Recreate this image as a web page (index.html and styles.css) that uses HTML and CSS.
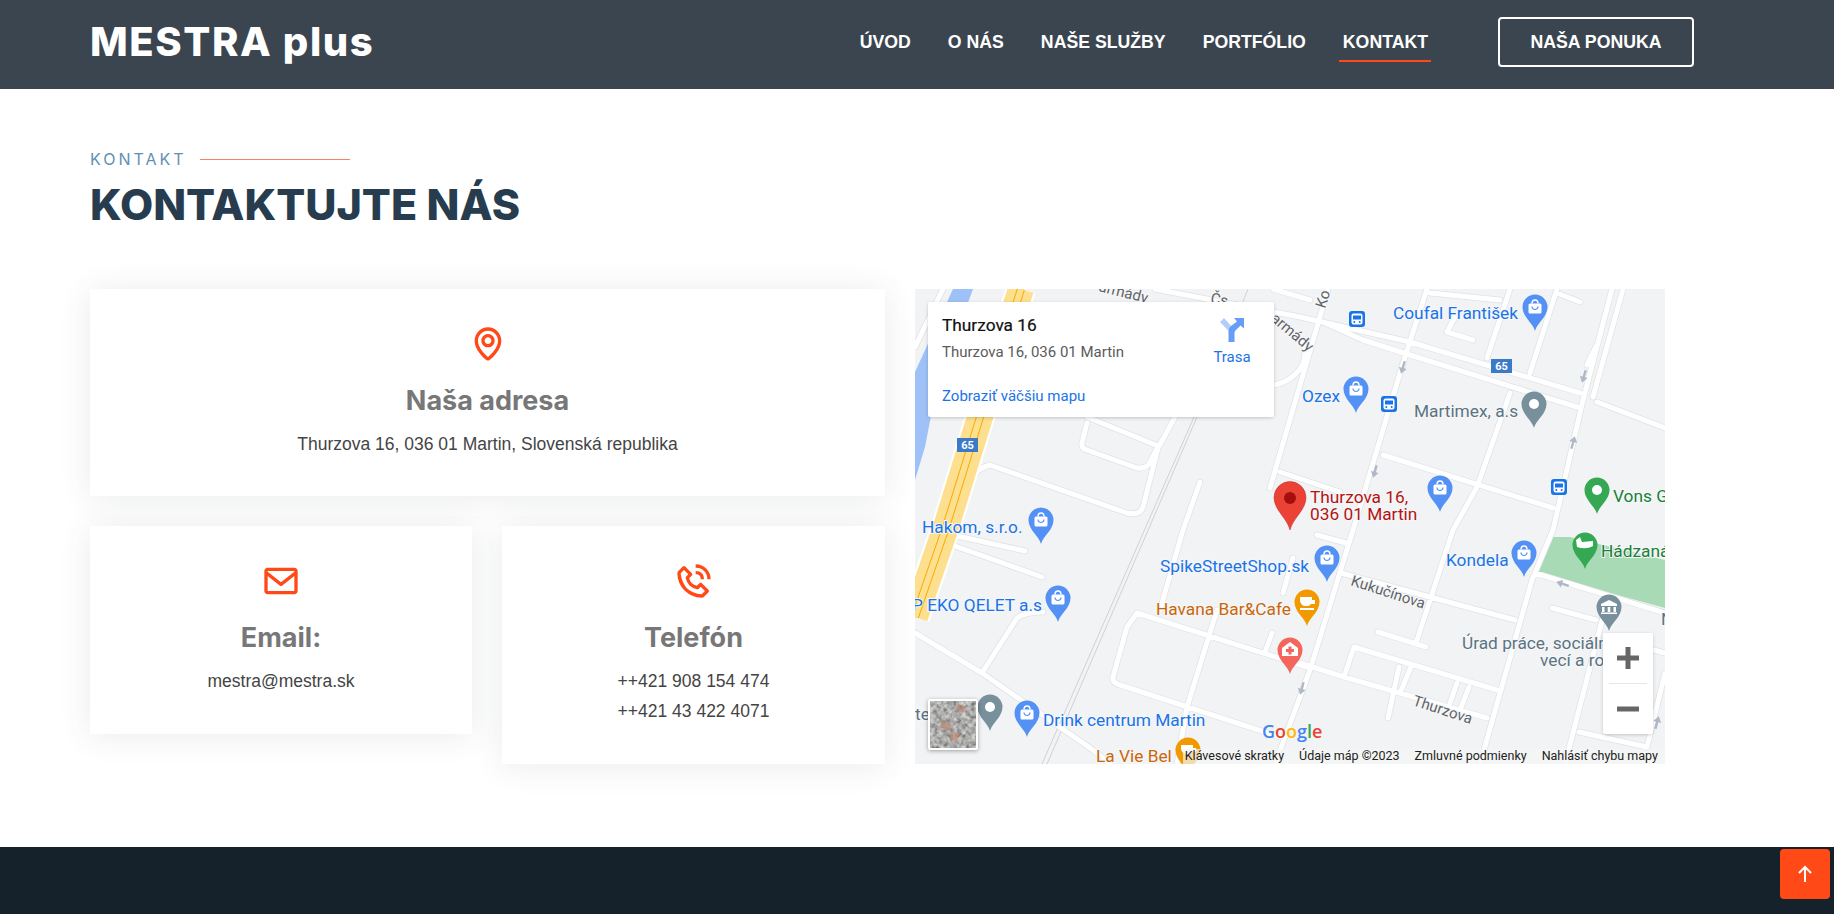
FILE: index.html
```html
<!DOCTYPE html>
<html lang="sk">
<head>
<meta charset="utf-8">
<title>MESTRA plus – Kontakt</title>
<link rel="stylesheet" href="styles.css">
</head>
<body>
<header class="site-header">
  <a class="logo" href="#">MESTRA plus</a>
  <nav class="nav">
    <a href="#">ÚVOD</a>
    <a href="#">O NÁS</a>
    <a href="#">NAŠE SLUŽBY</a>
    <a href="#">PORTFÓLIO</a>
    <a href="#" class="active">KONTAKT</a>
    <a href="#" class="nav-cta">NAŠA PONUKA</a>
  </nav>
</header>

<main class="contact">
  <div class="eyebrow"><span>KONTAKT</span><i class="eyebrow-line"></i></div>
  <h1 class="title">KONTAKTUJTE NÁS</h1>

  <div class="contact-grid">
    <div class="cards">
      <section class="card card-wide">
        <svg class="card-icon" viewBox="0 0 24 24"><path d="M12 14c2.206 0 4-1.794 4-4s-1.794-4-4-4-4 1.794-4 4 1.794 4 4 4zm0-6c1.103 0 2 .897 2 2s-.897 2-2 2-2-.897-2-2 .897-2 2-2z"/><path d="M11.42 21.814a.998.998 0 0 0 1.16 0C12.884 21.599 20.029 16.44 20 10c0-4.411-3.589-8-8-8S4 5.589 4 9.995c-.029 6.445 7.116 11.604 7.42 11.819zM12 4c3.309 0 6 2.691 6 6.005.021 4.438-4.388 8.423-6 9.73-1.611-1.308-6.021-5.294-6-9.735 0-3.309 2.691-6 6-6z"/></svg>
        <h3>Naša adresa</h3>
        <p>Thurzova 16, 036 01 Martin, Slovenská republika</p>
      </section>
      <section class="card">
        <svg class="card-icon" viewBox="0 0 24 24"><path d="M20 4H4c-1.103 0-2 .897-2 2v12c0 1.103.897 2 2 2h16c1.103 0 2-.897 2-2V6c0-1.103-.897-2-2-2zm0 2v.511l-8 6.223-8-6.222V6h16zM4 18V9.044l7.386 5.745a.994.994 0 0 0 1.228 0L20 9.044 20.002 18H4z"/></svg>
        <h3>Email:</h3>
        <p>mestra@mestra.sk</p>
      </section>
      <section class="card">
        <svg class="card-icon" viewBox="0 0 24 24"><path d="M16.57 22a2 2 0 0 0 1.43-.59l2.71-2.71a1 1 0 0 0 0-1.41l-4-4a1 1 0 0 0-1.41 0l-1.6 1.59a7.55 7.55 0 0 1-3-1.59 7.62 7.62 0 0 1-1.59-3l1.59-1.6a1 1 0 0 0 0-1.41l-4-4a1 1 0 0 0-1.41 0L2.59 6A2 2 0 0 0 2 7.43 15.28 15.28 0 0 0 6.3 17.7 15.28 15.28 0 0 0 16.57 22zM6 5.41 8.59 8 7.3 9.29a1 1 0 0 0-.3.91 10.12 10.12 0 0 0 2.3 4.5 10.08 10.08 0 0 0 4.5 2.3 1 1 0 0 0 .91-.27L16 15.41 18.59 18l-2 2a15.28 15.28 0 0 1-8.87-3.71A15.28 15.28 0 0 1 4 7.41zM20 11h2a8.81 8.81 0 0 0-9-9v2a6.77 6.77 0 0 1 7 7z"/><path d="M13 8c2.1 0 3 .9 3 3h2c0-3.22-1.78-5-5-5z"/></svg>
        <h3>Telefón</h3>
        <p>++421 908 154 474<br>++421 43 422 4071</p>
      </section>
    </div>

    <div class="map">
      <svg class="map-canvas" viewBox="915 289 750 475">
        <defs>
          <path id="roads" d="M960 507L973 477Q978 468 990 465L1127 513Q1140 516 1143 507L1158 448L1175 417L1183 395
            M1087 417L1158 446M1087 423L1082 443Q1081 449 1087 450L1137 468Q1147 469 1150 462L1158 447
            M1200 482L1183 530L1160 610
            M1427 289L1403 363L1353 530L1310 670L1275 764
            M1328 289L1270 488M1280 472L1340 492
            M1273 385Q1293 382 1303 364Q1307 352 1303 342
            M1155 289L1300 317L1410 342L1580 393
            M1323 322L1363 340L1410 355L1577 407
            M1597 402L1665 428M1273 289L1310 300M1430 293L1500 300
            M1510 289L1487 358M1557 289L1530 373M1557 293L1580 302
            M1457 313L1447 332L1473 340
            M1612 289L1583 400L1553 530L1532 580L1480 764
            M1623 289L1593 397M1587 365Q1590 358 1597 345
            M1510 393L1477 487L1453 530L1416 643
            M1383 455L1553 508
            M1535 573L1665 613M1341 573L1515 620
            M1378 632L1426 647
            M1354 647L1497 690M1354 647L1344 677M1300 663L1344 677L1487 718
            M1399 667L1388 718M1411 667L1400 693M1457 683L1450 703M1469 687L1460 710
            M1603 617L1565 764M1579 732L1647 747M1552 608L1596 620M1665 673L1647 747M1654 650L1665 653
            M1317 535L1346 543
            M953 535L1025 551M952 545L1042 577
            M915 633L982 673L1093 750L1110 764
            M982 673L1017 618Q1025 612 1043 612
            M1137 613L1127 627L1113 677Q1112 683 1120 685L1280 737M1137 613L1307 667
            M1217 610L1187 707L1177 764M1272 633L1265 652
            M1293 558L1283 593
            M943 289L915 347"/>
          <g id="pin"><path d="M0 24C-2 16-12.500 10-12.500 0A12.500 12.500 0 1 1 12.500 0C12.500 10 2 16 0 24Z"/></g>
          <g id="shop">
            <use href="#pin"/>
            <path class="glyph-line" d="M-3-3.500a3 3.500 0 0 1 6 0"/>
            <rect class="glyph" x="-6.500" y="-3.500" width="13" height="10" rx="1.500"/>
            <path class="glyph-smile" d="M-3-.5a3 3 0 0 0 6 0"/>
          </g>
          <g id="dotpin"><use href="#pin"/><circle class="glyph" r="5"/></g>
          <g id="bus"><rect x="-8" y="-8" width="16" height="16" rx="3"/><rect class="glyph" x="-5.500" y="-5.500" width="11" height="11" rx="2"/><rect x="-4" y="-3.500" width="8" height="4"/><circle cx="-2.700" cy="3" r="1"/><circle cx="2.700" cy="3" r="1"/></g>
          <g id="arrow"><path d="M0-7L-4-1H-1.200V6H1.200V-1H4Z"/></g>
          <filter id="noise" x="0" y="0" width="100%" height="100%">
            <feTurbulence type="fractalNoise" baseFrequency="0.22" numOctaves="2" seed="7"/>
            <feColorMatrix type="matrix" values="0.9 0 0 0 -0.03  0.9 0 0 0 -0.03  0.9 0 0 0 -0.04  0 0 0 0 1"/>
            <feGaussianBlur stdDeviation="0.5"/>
          </filter>
        </defs>

        <rect class="m-bg" x="915" y="289" width="750" height="475"/>
        <path class="m-park" d="M1550 537L1537 573L1665 608V560L1570 537Z"/>
        <path class="m-water" d="M953 289H973L936 390L925 447L915 480V372Z"/>

        <path class="m-rail" d="M1197 417L1047 764M1194 417L1042 764M1248 289L1197 417"/>
        <use href="#roads" class="m-casing"/>
        <use href="#roads" class="m-road"/>

        <path class="hw-case" d="M1021 289L980 417L946 527L915 617"/>
        <path class="hw-fill" d="M1021 289L980 417L946 527L915 617"/>
        <path class="hw-line" d="M1021 289L980 417L946 527L915 617"/>
        <path class="hw-mid" d="M1021 289L980 417L946 527L915 617"/>

        <g class="arrows">
          <use href="#arrow" transform="translate(1403 367) rotate(196)"/>
          <use href="#arrow" transform="translate(1375 471) rotate(196)"/>
          <use href="#arrow" transform="translate(1584 376) rotate(196)"/>
          <use href="#arrow" transform="translate(1573 443) rotate(15)"/>
          <use href="#arrow" transform="translate(1563 584) rotate(-72)"/>
          <use href="#arrow" transform="translate(1657 723) rotate(15)"/>
          <use href="#arrow" transform="translate(1302 688) rotate(196)"/>
        </g>

        <g class="shield"><rect x="957" y="438" width="21" height="14"/><text x="967.500" y="449">65</text></g>
        <g class="shield"><rect x="1491" y="359" width="21" height="14"/><text x="1501.500" y="370">65</text></g>

        <g class="buses">
          <use href="#bus" x="1357" y="319"/>
          <use href="#bus" x="1389" y="404"/>
          <use href="#bus" x="1559" y="487"/>
        </g>

        <g class="pins-blue">
          <use href="#shop" x="1535" y="307"/>
          <use href="#shop" x="1356" y="389"/>
          <use href="#shop" x="1440" y="488"/>
          <use href="#shop" x="1041" y="520"/>
          <use href="#shop" x="1058" y="598"/>
          <use href="#shop" x="1027" y="713"/>
          <use href="#shop" x="1327" y="558"/>
          <use href="#shop" x="1524" y="553"/>
        </g>
        <g class="pins-grey">
          <use href="#dotpin" x="1534" y="404"/>
          <use href="#dotpin" x="990" y="707"/>
          <use href="#pin" x="1609" y="607"/>
          <path class="glyph" d="M1601 604L1609 600L1617 604V606H1601ZM1602 607H1604.500V612H1602ZM1607.700 607H1610.300V612H1607.700ZM1613.500 607H1616V612H1613.500ZM1601 612.500H1617V614H1601Z"/>
        </g>
        <g class="pins-green">
          <use href="#dotpin" x="1597" y="490"/>
          <use href="#pin" x="1585" y="545"/>
          <path class="glyph" d="M1576 540L1580 537L1582 542L1593 541V546Q1586 550 1577 547Z"/>
        </g>
        <g class="pins-orange">
          <use href="#pin" x="1307" y="602"/>
          <path class="glyph" d="M1300 597H1312V600H1315V604H1311Q1310 606 1307 606H1304Q1301 605 1300 601ZM1300 608H1314V610H1300Z"/>
          <use href="#pin" x="1188" y="750"/>
          <path class="glyph" d="M1181 745H1193V748H1196V752H1192Q1191 754 1188 754H1185Q1182 753 1181 749Z"/>
        </g>
        <g class="pins-red">
          <use href="#pin" x="1290" y="650"/>
          <path class="glyph" d="M1290 642L1298 648V656H1282V648Z"/>
          <path class="pin-cross" d="M1288.500 646.500H1291.500V649H1294V652H1291.500V654.500H1288.500V652H1286V649H1288.500Z"/>
        </g>

        <path class="marker" d="M1290 530C1287 518 1274 510 1274 497.500A16 16 0 1 1 1306 497.500C1306 510 1293 518 1290 530Z"/>
        <circle class="marker-dot" cx="1290" cy="498" r="6"/>

        <g class="lbl lbl-blue">
          <text x="1393" y="319">Coufal František</text>
          <text x="1302" y="402">Ozex</text>
          <text x="922" y="533">Hakom, s.r.o.</text>
          <text x="912" y="611">P EKO QELET a.s</text>
          <text x="1160" y="572">SpikeStreetShop.sk</text>
          <text x="1043" y="726">Drink centrum Martin</text>
          <text x="1446" y="566">Kondela</text>
        </g>
        <g class="lbl lbl-grey">
          <text x="1414" y="417">Martimex, a.s</text>
          <text x="915" y="720">te</text>
          <text x="1462" y="649">Úrad práce, sociálnych</text>
          <text x="1540" y="666">vecí a rodiny</text>
          <text x="1661" y="625">N</text>
        </g>
        <g class="lbl lbl-red">
          <text x="1310" y="503">Thurzova 16,</text>
          <text x="1310" y="520">036 01 Martin</text>
        </g>
        <g class="lbl lbl-green">
          <text x="1613" y="502">Vons Group</text>
          <text x="1601" y="557">Hádzaná</text>
        </g>
        <g class="lbl lbl-orange">
          <text x="1156" y="615">Havana Bar&amp;Cafe</text>
          <text x="1096" y="762">La Vie Bel</text>
        </g>
        <g class="lbl street">
          <text transform="translate(1350 585) rotate(18)">Kukučínova</text>
          <text transform="translate(1412 705) rotate(18)">Thurzova</text>
          <text transform="translate(1270 320) rotate(40)">armády</text>
          <text transform="translate(1098 291) rotate(14)">armády</text>
          <text transform="translate(1210 303) rotate(10)">Čs</text>
          <text transform="translate(1325 309) rotate(-72)">Ko</text>
        </g>

        <text class="glogo" x="1262" y="738"><tspan class="g-b">G</tspan><tspan class="g-r">o</tspan><tspan class="g-y">o</tspan><tspan class="g-b">g</tspan><tspan class="g-g">l</tspan><tspan class="g-r">e</tspan></text>
      </svg>

      <div class="map-info">
        <div class="map-info-text">
          <div class="place-name">Thurzova 16</div>
          <div class="place-addr">Thurzova 16, 036 01 Martin</div>
          <a class="place-link" href="#">Zobraziť väčšiu mapu</a>
        </div>
        <a class="directions" href="#">
          <svg viewBox="0 0 24 24" class="directions-icon"><path class="dir-light" d="M0 4L4 0L13 10V14H9.500Z"/><path class="dir-main" d="M8.500 24V13Q8.500 10 11 8L17 3.500L14 0H24V10.500L20.500 7.500L16 12Q14.500 13 14.500 15V24Z"/></svg>
          <span>Trasa</span>
        </a>
      </div>

      <div class="map-thumb">
        <svg viewBox="0 0 46 47">
          <rect class="sat-base" width="46" height="47"/>
          <path class="sat-roof" d="M12 20L22 24L18 30L10 26ZM22 30L30 34L26 42L20 36ZM28 3L36 6L33 12L26 9Z"/>
          <path class="sat-light" d="M20 0L24 16L46 22M0 22L12 30L22 47"/>
        </svg>
      </div>

      <div class="map-zoom">
        <button class="zoom-btn" aria-label="Priblížiť"><svg viewBox="0 0 22 22"><path d="M8.500 0h5v8.500H22v5h-8.500V22h-5v-8.500H0v-5h8.500z"/></svg></button>
        <i class="zoom-sep"></i>
        <button class="zoom-btn" aria-label="Oddialiť"><svg viewBox="0 0 22 22"><path d="M0 8.500h22v5H0z"/></svg></button>
      </div>

      <div class="map-foot">
        <span>Klávesové skratky</span>
        <span>Údaje máp ©2023</span>
        <span>Zmluvné podmienky</span>
        <span>Nahlásiť chybu mapy</span>
      </div>
    </div>
  </div>
</main>

<footer class="site-footer"></footer>

<a class="to-top" href="#" aria-label="Hore">
  <svg viewBox="0 0 24 24"><path d="M12 5v15M6 11l6-6 6 6"/></svg>
</a>
</body>
</html>
```

FILE: styles.css
```css
* { box-sizing: border-box; }
html, body { margin: 0; height: 914px; overflow: hidden; background: #fff; }
body { font-family: "Liberation Sans", Arial, sans-serif; color: #444; }
a { text-decoration: none; color: inherit; }

.site-header {
  height: 89px;
  background: #3b454f;
  display: flex;
  align-items: center;
  justify-content: space-between;
  padding: 0 140px 5px 90px;
}
.logo {
  font-family: Inter, "Open Sans", sans-serif;
  font-weight: 800;
  font-size: 40px;
  letter-spacing: 1.6px;
  color: #fff;
  line-height: 1;
}
.nav { display: flex; align-items: center; }
.nav a {
  position: relative;
  font-weight: 700;
  font-size: 17.700px;
  color: #fff;
  margin-left: 37px;
  line-height: 20px;
}
.nav a.active::after {
  content: "";
  position: absolute;
  left: -4px;
  right: -3px;
  top: 28px;
  height: 2px;
  background: #ff4a17;
}
.nav a.nav-cta {
  width: 196px;
  height: 50px;
  margin-left: 70px;
  border: 2px solid #fff;
  border-radius: 4px;
  display: flex;
  align-items: center;
  justify-content: center;
}

.contact { padding: 58px 169px 83px 90px; }
.eyebrow {
  display: flex;
  align-items: center;
  height: 24px;
  font-family: Inter, "Open Sans", sans-serif;
  font-size: 16px;
  letter-spacing: 3px;
  color: #5f90b4;
}
.eyebrow-line {
  display: block;
  width: 150px;
  height: 1px;
  background: #f9845f;
  margin-left: 13px;
}
.title {
  margin: 5px 0 57px;
  font-family: Inter, "Open Sans", sans-serif;
  font-weight: 800;
  font-size: 43px;
  line-height: 56px;
  color: #273c4e;
}

.contact-grid {
  display: grid;
  grid-template-columns: 795px 750px;
  gap: 30px;
  align-items: start;
}
.cards {
  display: grid;
  grid-template-columns: 382px 383px;
  gap: 30px;
  align-items: start;
}
.card {
  background: #fff;
  box-shadow: 0 2px 30px rgba(60, 70, 90, 0.11);
  text-align: center;
  padding: 35px 20px 38px;
}
.card-wide { grid-column: 1 / 3; padding-bottom: 37px; }
.card-icon { display: block; width: 40px; height: 40px; margin: 0 auto 22px; fill: #ff4a17; }
.card h3 {
  margin: 0 0 13px;
  font-family: Inter, "Open Sans", sans-serif;
  font-weight: 700;
  font-size: 27px;
  line-height: 30px;
  color: #777;
}
.card p { margin: 0; font-size: 17.5px; line-height: 30px; color: #444; }

.map { position: relative; width: 750px; height: 475px; overflow: hidden; font-family: Roboto, sans-serif; }
.map-canvas { display: block; width: 750px; height: 475px; }
.m-bg { fill: #f2f3f5; }
.m-park { fill: #a8dab5; }
.m-water { fill: #9ec2f7; }
.m-rail { fill: none; stroke: #cfd1d4; stroke-width: 1; }
.m-casing { fill: none; stroke: #e0e2e5; stroke-width: 6.500; stroke-linecap: round; stroke-linejoin: round; }
.m-road { fill: none; stroke: #fff; stroke-width: 5; stroke-linecap: round; stroke-linejoin: round; }
.hw-case { fill: none; stroke: #fff; stroke-width: 30; }
.hw-fill { fill: none; stroke: #fde08f; stroke-width: 26; }
.hw-line { fill: none; stroke: #f9ab00; stroke-width: 8; }
.hw-mid { fill: none; stroke: #fde08f; stroke-width: 6; }
.arrows { fill: #aeb8c6; }
.shield rect { fill: #3a7ac9; }
.shield text { fill: #fff; font: 700 11px Roboto, sans-serif; text-anchor: middle; }
.buses { fill: #1a73e8; }
.pins-blue { fill: #5491f5; }
.pins-grey { fill: #78909c; }
.pins-green { fill: #34a853; }
.pins-orange { fill: #f29900; }
.pins-red { fill: #f4665c; }
.glyph { fill: #fff; }
.glyph-line { fill: none; stroke: #fff; stroke-width: 1.500; }
.glyph-smile { fill: none; stroke: #5491f5; stroke-width: 1.200; }
.pin-cross { fill: #f4665c; }
.marker { fill: #ea4335; stroke: #c5221f; stroke-width: .5; }
.marker-dot { fill: #a50e0e; }
.lbl text { font: 400 17.300px Roboto, sans-serif; paint-order: stroke; stroke: #f6f7f8; stroke-width: 2px; stroke-linejoin: round; }
.lbl-blue { fill: #1a73e8; }
.lbl-grey { fill: #5b7383; }
.lbl-red { fill: #b31412; }
.lbl-green { fill: #188038; }
.lbl-orange { fill: #c9670c; }
.lbl.street text { font-size: 15px; font-weight: 400; }
.street { fill: #5f6368; }
.glogo { font: 600 18px "Open Sans", sans-serif; }
.g-b { fill: #4285f4; }
.g-r { fill: #ea4335; }
.g-y { fill: #fbbc04; }
.g-g { fill: #34a853; }

.map-info {
  position: absolute;
  left: 13px;
  top: 13px;
  width: 346px;
  height: 115px;
  background: #fff;
  border-radius: 2px;
  box-shadow: 0 1px 4px -1px rgba(0, 0, 0, 0.3);
  padding: 13px 15px 13px 14px;
  display: flex;
  justify-content: space-between;
}
.map-info-text { display: flex; flex-direction: column; }
.place-name { font-size: 17.300px; font-weight: 400; line-height: 20px; color: #111; -webkit-text-stroke: .2px #111; }
.place-addr { font-size: 15px; line-height: 20px; margin-top: 7px; color: #5b5b5b; }
.place-link { font-size: 15px; line-height: 20px; margin-top: 24px; color: #1a73e8; }
.directions { display: flex; flex-direction: column; align-items: center; width: 36px; margin: 3px 9px 0 0; font-size: 15px; color: #1a73e8; }
.directions-icon { width: 24px; height: 24px; display: block; }
.directions span { margin-top: 6px; line-height: 18px; }
.dir-light { fill: #b3cefb; }
.dir-main { fill: #669df6; }

.map-thumb {
  position: absolute;
  left: 13px;
  top: 410px;
  width: 50px;
  height: 51px;
  background: #fff;
  border: 2px solid #fff;
  border-radius: 2px;
  box-shadow: 0 1px 4px rgba(0, 0, 0, 0.35);
}
.map-thumb svg { display: block; width: 46px; height: 47px; }
.sat-base { filter: url(#noise); }
.sat-roof { fill: #b97f6c; opacity: .65; }
.sat-light { fill: none; stroke: #a0a29d; stroke-width: 1.500; opacity: .6; }

.map-zoom {
  position: absolute;
  left: 688px;
  top: 344px;
  width: 50px;
  height: 101px;
  background: #fff;
  border-radius: 2px;
  box-shadow: 0 1px 4px -1px rgba(0, 0, 0, 0.3);
  display: flex;
  flex-direction: column;
  align-items: center;
}
.zoom-btn { flex: 1; width: 50px; padding: 0; border: 0; background: none; display: flex; align-items: center; justify-content: center; }
.zoom-btn svg { width: 22px; height: 22px; fill: #666; }
.zoom-sep { display: block; width: 38px; height: 1px; background: #e6e6e6; }

.map-foot {
  position: absolute;
  right: 0;
  bottom: 0;
  height: 15px;
  padding: 0 7px 0 2px;
  display: flex;
  gap: 15px;
  background: rgba(245, 245, 245, 0.7);
  font-size: 12.500px;
  line-height: 14px;
  color: #222;
  white-space: nowrap;
}

.site-footer { height: 67px; background: #16222b; }
.to-top {
  position: fixed;
  right: 4px;
  bottom: 15px;
  width: 50px;
  height: 50px;
  border-radius: 4px;
  background: #ff4a17;
  display: flex;
  align-items: center;
  justify-content: center;
}
.to-top svg { width: 24px; height: 24px; fill: none; stroke: #fff; stroke-width: 2; }
```
